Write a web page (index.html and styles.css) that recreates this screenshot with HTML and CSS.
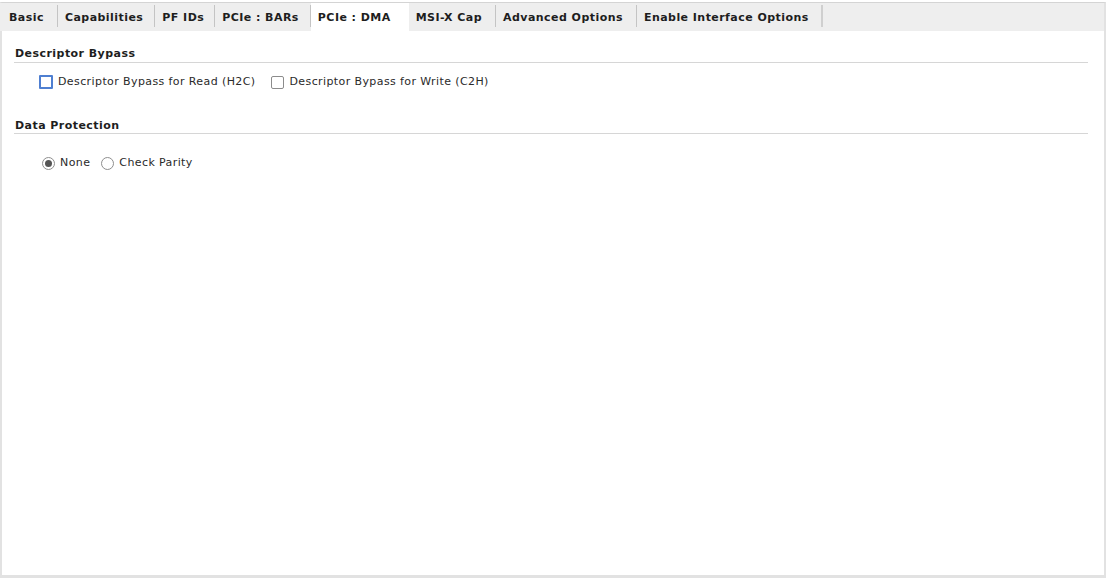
FILE: index.html
```html
<!DOCTYPE html>
<html>
<head>
<meta charset="utf-8">
<link rel="stylesheet" href="styles.css">
</head>
<body>
<div class="window">
  <div class="panel">
    <div class="tabbar">
      <div class="tab first">Basic</div>
      <div class="tab">Capabilities</div>
      <div class="tab narrow">PF IDs</div>
      <div class="tab">PCIe : BARs</div>
      <div class="tab active">PCIe : DMA</div>
      <div class="tab after">MSI-X Cap</div>
      <div class="tab after">Advanced Options</div>
      <div class="tab after last">Enable Interface Options</div>
    </div>
    <div class="content">
      <div class="section">
        <div class="section-title">Descriptor Bypass</div>
        <div class="options checks">
          <label class="opt"><span class="box focused"></span><span class="lbl">Descriptor Bypass for Read (H2C)</span></label>
          <label class="opt"><span class="box"></span><span class="lbl">Descriptor Bypass for Write (C2H)</span></label>
        </div>
      </div>
      <div class="section second">
        <div class="section-title">Data Protection</div>
        <div class="options radios">
          <label class="opt"><span class="radio checked"></span><span class="lbl">None</span></label>
          <label class="opt"><span class="radio"></span><span class="lbl">Check Parity</span></label>
        </div>
      </div>
    </div>
  </div>
</div>
</body>
</html>
```

FILE: styles.css
```css
html, body {
  margin: 0;
  padding: 0;
  background: #ffffff;
}
body {
  font-family: "DejaVu Sans", "Liberation Sans", sans-serif;
  font-size: 11px;
  color: #262626;
  letter-spacing: 0.4px;
}
.window {
  width: 1106px;
  height: 578px;
  box-sizing: border-box;
  padding-top: 2px;
}
.panel {
  height: 100%;
  box-sizing: border-box;
  border-top: 1px solid #d4d4d4;
  border-left: 2px solid #e2e2e2;
  border-right: 2px solid #e2e2e2;
  border-bottom: 3px solid #e2e2e2;
  display: flex;
  flex-direction: column;
}
.tabbar {
  height: 28px;
  background: #eeeeee;
  display: flex;
  align-items: stretch;
  margin-left: -2px;
}
.tab {
  font-weight: bold;
  letter-spacing: 0.45px;
  color: #1e1e1e;
  padding: 1px 12px 0 7px;
  display: flex;
  align-items: center;
  position: relative;
  line-height: 13px;
}
.tab.first {
  padding-left: 9px;
  padding-right: 14px;
}
.tab.narrow {
  padding-right: 11px;
}
.tab.after {
  padding-right: 14px;
}
.tab::after {
  content: "";
  position: absolute;
  right: 0;
  top: 2px;
  bottom: 4px;
  width: 1px;
  background: #c4c4c4;
}
.tab.active {
  background: #ffffff;
  padding-right: 18px;
}
.tab.active::after {
  display: none;
}
.tab.last::after {
  width: 2px;
  background: #cfcfcf;
}
.content {
  padding: 0 16px 0 12px;
}
.section {
  margin-top: 16px;
}
.section.second {
  margin-top: 29px;
}
.section-title {
  font-weight: bold;
  letter-spacing: 0.45px;
  color: #1e1e1e;
  line-height: 13px;
  padding: 0 0 2px 1px;
  border-bottom: 1px solid #d6d6d6;
}
.second .section-title {
  padding-top: 1px;
  padding-bottom: 1px;
}
.options {
  display: flex;
  align-items: center;
}
.checks {
  margin-top: 12px;
  padding-left: 25px;
  gap: 16px;
}
.radios {
  margin-top: 22px;
  padding-left: 28px;
  gap: 11px;
}
.opt {
  display: flex;
  align-items: center;
  gap: 5px;
  color: #2a2a2a;
  line-height: 14px;
}
.box {
  width: 11px;
  height: 11px;
  border: 1px solid #8c8c8c;
  border-radius: 2px;
  background: #ffffff;
  display: inline-block;
}
.box.focused {
  width: 10px;
  height: 10px;
  border: 2px solid #4f7fd1;
  border-radius: 1px;
}
.radio {
  width: 11px;
  height: 11px;
  border: 1px solid #8e8e8e;
  border-radius: 50%;
  background: #ffffff;
  display: inline-flex;
  align-items: center;
  justify-content: center;
}
.radio.checked::before {
  content: "";
  width: 7px;
  height: 7px;
  border-radius: 50%;
  background: #555555;
}
```
